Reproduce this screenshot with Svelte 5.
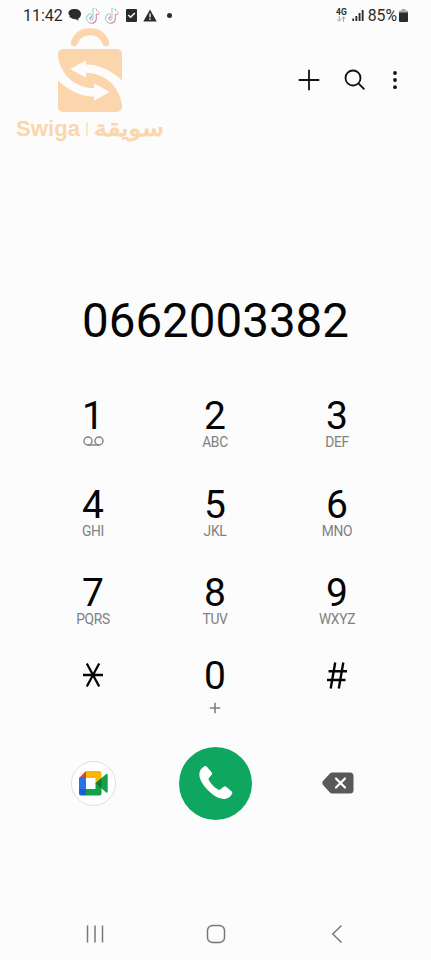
<script lang="ts">
  type Key = { digit: string; letters?: string };

  const dialed = '0662003382';

  const keys: Key[] = [
    { digit: '1' },
    { digit: '2', letters: 'ABC' },
    { digit: '3', letters: 'DEF' },
    { digit: '4', letters: 'GHI' },
    { digit: '5', letters: 'JKL' },
    { digit: '6', letters: 'MNO' },
    { digit: '7', letters: 'PQRS' },
    { digit: '8', letters: 'TUV' },
    { digit: '9', letters: 'WXYZ' },
    { digit: '*' },
    { digit: '0', letters: '+' },
    { digit: '#' }
  ];
</script>

{#snippet note()}
  <svg class="note" width="15" height="17" viewBox="0 0 15 17">
    <g fill="none" stroke-width="3.2">
      <path d="M8.600 1.500v10a3.200 3.200 0 1 1-3.200-3.200M8.600 2.500c.4 2 1.900 3.300 4 3.500" stroke="#8fdcd8" transform="translate(-.6 -.4)" />
      <path d="M8.600 1.500v10a3.200 3.200 0 1 1-3.200-3.200M8.600 2.500c.4 2 1.900 3.300 4 3.500" stroke="#c58a9f" transform="translate(.6 .5)" />
      <path d="M8.600 1.500v10a3.200 3.200 0 1 1-3.200-3.200M8.600 2.500c.4 2 1.900 3.300 4 3.500" stroke="#fff" stroke-width="2.300" />
    </g>
  </svg>
{/snippet}

<div class="phone">
  <header class="status">
    <span class="time">11:42</span>
    <div class="notifications">
      <svg width="14" height="14" viewBox="0 0 14 14" fill="#2b2b2b">
        <path d="M6.600 1C10.200 1 13 2.800 13 6c0 2.300-1.100 3.600-2.700 4.400v2.400L8 11.200C5.700 11.300 3.800 10.700 2.700 9.500L1.300 9.300l.5-1.500C.9 7 .4 6.200.4 5.300.4 2.500 3 1 6.600 1z" />
      </svg>
      {@render note()}
      {@render note()}
      <svg class="task" width="11" height="13" viewBox="0 0 11 13">
        <rect width="11" height="13" rx="1" fill="#2b2b2b" />
        <path d="M2.300 6l2.300 2.300 4.200-4.300" fill="none" stroke="#fff" stroke-width="1.500" />
      </svg>
      <svg class="warning" width="14" height="13" viewBox="0 0 14 13">
        <path d="M7 .5 13.700 12.500H.3z" fill="#2b2b2b" />
        <path d="M7 4.500v4M7 9.600v1.500" stroke="#fff" stroke-width="1.300" />
      </svg>
      <span class="more-dot"></span>
    </div>
    <div class="system">
      <div class="network">
        <span>4G</span>
        <svg width="9" height="6" viewBox="0 0 9 6" fill="none" stroke="#a3a3a3" stroke-width="1">
          <path d="M2.300 0v5M.4 3.200l1.900 2 1.900-2M6.600 6V1M4.800 2.800l1.800-2 1.900 2" />
        </svg>
      </div>
      <svg width="12" height="12" viewBox="0 0 12 12" fill="#303030">
        <path d="M.3 9.500h1.800V12H.3zM3.400 7h1.900v5H3.400zM6.600 4h1.900v8H6.600zM9.700 1h1.900v11H9.700z" />
      </svg>
      <span class="percent">85%</span>
      <svg class="battery" width="9" height="13" viewBox="0 0 9 13">
        <path d="M2.500 0h4v1.500H8a1 1 0 0 1 1 1V4H0V2.500a1 1 0 0 1 1-1h1.500z" fill="#a9a9a9" />
        <path d="M0 3.500h9V12a1 1 0 0 1-1 1H1a1 1 0 0 1-1-1z" fill="#2b2b2b" />
      </svg>
    </div>
  </header>

  <div class="watermark">
    <svg width="160" height="120" viewBox="0 0 160 120">
      <path d="M59.200 17.800C61.800 10.500 67.500 6.800 75 6.800s13.200 3.700 15.800 11" fill="none" stroke="#fbd6ac" stroke-width="7" stroke-linecap="round" />
      <rect x="43" y="24" width="64" height="63" rx="5" fill="#fbd6ac" />
      <path
        d="M55.300 44 71 35.300v4.200C84 39.500 97 45.500 107.500 56v27C105.500 62 91 48.300 71 47.700v5z
           M94.700 67 79 75.800v-4.300C66 71.500 53 65.500 42.500 55V28C44.500 49 59 62.700 79 63.300v-5z"
        fill="#fcfcfc"
      />
      <g fill="#fbd6ac">
        <text class="brand" x="1" y="111" textLength="64" lengthAdjust="spacingAndGlyphs">Swiga</text>
        <rect x="71.300" y="97" width="1.200" height="14" />
        <text class="brand-ar" x="79" y="111" textLength="70" lengthAdjust="spacingAndGlyphs">سويقة</text>
      </g>
    </svg>
  </div>

  <div class="toolbar">
    <svg width="22" height="22" viewBox="0 0 22 22" stroke="#111" stroke-width="1.800">
      <path d="M11 .7v20.600M.7 11h20.600" />
    </svg>
    <svg class="search" width="22" height="22" viewBox="0 0 22 22" fill="none" stroke="#111" stroke-width="1.800">
      <circle cx="9" cy="9" r="7.500" />
      <path d="M14.400 14.400l6 6" />
    </svg>
    <svg class="menu" width="4" height="20" viewBox="0 0 4 20" fill="#111">
      <circle cx="2" cy="3" r="1.900" />
      <circle cx="2" cy="10" r="1.900" />
      <circle cx="2" cy="17.200" r="1.900" />
    </svg>
  </div>

  <div class="dialed">{dialed}</div>

  <div class="keypad">
    {#each keys as key}
      <div class="key">
        {#if key.digit === '*'}
          <svg class="star" width="22" height="26" viewBox="0 0 22 26" stroke="#050505" stroke-width="2.300">
            <path d="M1 13h20M4.800 1.500l12.400 23M17.200 1.500l-12.400 23" />
          </svg>
        {:else if key.digit === '#'}
          <svg class="hash" width="22" height="27" viewBox="0 0 22 27" stroke="#050505" stroke-width="2.400">
            <path d="M9.200.5 4.700 26.500M17.300.5l-4.500 26M2.500 9.200h18.500M1 18h18.500" />
          </svg>
        {:else}
          <span class="digit">{key.digit}</span>
        {/if}
        {#if key.digit === '1'}
          <svg class="voicemail" width="21" height="11" viewBox="0 0 21 11" fill="none" stroke="#808080" stroke-width="1.400">
            <circle cx="5" cy="5" r="4" />
            <circle cx="16" cy="5" r="4" />
            <path d="M5 9h11" />
          </svg>
        {:else if key.letters === '+'}
          <svg class="plus" width="12" height="12" viewBox="0 0 12 12" stroke="#808080" stroke-width="1.600">
            <path d="M6 .8v10.400M.8 6h10.400" />
          </svg>
        {:else if key.letters}
          <span class="letters">{key.letters}</span>
        {/if}
      </div>
    {/each}
  </div>

  <div class="actions">
    <div class="meet">
      <svg width="29" height="25" viewBox="0 0 29 25">
        <path d="M7 0v7H0z" fill="#e33b2e" />
        <path d="M7 0h13.500a2 2 0 0 1 2 2v10H16.500V7H7z" fill="#fbb505" />
        <path d="M0 7h7v11H0z" fill="#2672ea" />
        <path d="M0 18h7v6.500H2a2 2 0 0 1-2-2z" fill="#1b5fd0" />
        <path d="M7 24.500V18h9.500v-6h6v10.500a2 2 0 0 1-2 2z" fill="#12a04a" />
        <path d="M16.500 12.300l10.700-9.200c.7-.5 1.500-.2 1.500.7v17c0 .9-.8 1.200-1.500.7z" fill="#12a04a" />
        <path d="M16.500 12.300 22.500 7v10.500z" fill="#107a35" />
      </svg>
    </div>
    <div class="call">
      <svg width="36" height="36" viewBox="0 0 36 36" fill="#fff">
        <path d="M1.400 8.500C1.700 5.200 4 2.400 6.500 1.300c1-.4 1.900-.2 2.600.7l4.500 5.200c.8.900.8 1.800.1 2.600l-2.600 3c-.7.800-.7 1.600-.2 2.500 2.200 3.900 5.300 7 9.200 9.200.9.500 1.700.5 2.500-.2l3-2.600c.8-.7 1.700-.7 2.600 0l5.200 4.500c.9.700 1.100 1.600.7 2.600-1.100 2.500-3.900 4.800-7.200 5.100-4.900.5-11.100-2.800-16.700-8.400S.9 13.400 1.400 8.500z" />
      </svg>
    </div>
    <svg width="32" height="22" viewBox="0 0 32 22">
      <path d="M10.500.5H28a3.500 3.500 0 0 1 3.500 3.500v14a3.500 3.500 0 0 1-3.500 3.500H10.500c-1.200 0-2-.4-2.800-1.200L1 12.900c-1-1.200-1-2.600 0-3.800l6.700-7.400C8.500.9 9.300.5 10.500.5z" fill="#595959" />
      <path d="M14 6.500l9 9M23 6.500l-9 9" stroke="#fff" stroke-width="2.200" stroke-linecap="round" />
    </svg>
  </div>

  <nav class="navbar">
    <svg width="18" height="18" viewBox="0 0 18 18" stroke="#777" stroke-width="1.500">
      <path d="M1.500.5v17M9 .5v17M16.500 .5v17" />
    </svg>
    <svg width="20" height="20" viewBox="0 0 20 20" fill="none" stroke="#777" stroke-width="1.500">
      <rect x="1.500" y="1.500" width="17" height="17" rx="5" />
    </svg>
    <svg width="12" height="20" viewBox="0 0 12 20" fill="none" stroke="#777" stroke-width="1.500">
      <path d="M10.500 1.500 1.800 10l8.700 8.500" />
    </svg>
  </nav>
</div>

<style>
  :global(body) {
    background: #fcfcfc;
  }

  svg {
    display: block;
    flex: none;
  }

  .phone {
    position: relative;
    display: flex;
    flex-direction: column;
    box-sizing: border-box;
    width: 431px;
    height: 960px;
    overflow: hidden;
    background: #fcfcfc;
    color: #050505;
    font-family: Roboto, sans-serif;
  }

  .status {
    display: flex;
    align-items: center;
    height: 30px;
    padding: 0 23px;
    color: #2b2b2b;
    font-size: 16px;
  }

  .time {
    width: 45px;
  }

  .notifications {
    display: flex;
    align-items: center;
  }

  .note {
    margin-left: 4px;
  }

  .task {
    margin-left: 6px;
  }

  .warning {
    margin-left: 6px;
  }

  .more-dot {
    width: 5px;
    height: 5px;
    margin-left: 10px;
    border-radius: 50%;
    background: #2b2b2b;
  }

  .system {
    display: flex;
    align-items: center;
    margin-left: auto;
  }

  .network {
    display: flex;
    flex-direction: column;
    align-items: center;
    margin-right: 5px;
    font-size: 8.5px;
    font-weight: 700;
    line-height: 8px;
  }

  .percent {
    margin-left: 4px;
    font-size: 15.8px;
  }

  .battery {
    margin-left: 2px;
  }

  /* brand mark floats over the screen */
  .watermark {
    position: absolute;
    top: 25px;
    left: 15px;
  }

  .brand {
    font: 700 22px 'Liberation Sans', sans-serif;
  }

  .brand-ar {
    font: 400 22px 'DejaVu Sans', sans-serif;
    stroke: #fbd6ac;
    stroke-width: 1px;
  }

  .toolbar {
    display: flex;
    align-items: center;
    justify-content: flex-end;
    height: 100px;
    padding-right: 34px;
  }

  .search {
    margin-left: 24px;
  }

  .menu {
    margin-left: 27px;
  }

  .dialed {
    margin-top: 161px;
    font-size: 47.5px;
    line-height: 60px;
    text-align: center;
  }

  .keypad {
    display: grid;
    grid-template-columns: repeat(3, 122px);
    grid-template-rows: 88.5px 88.5px 83px 84px;
    margin: 47px 0 0 32px;
  }

  .key {
    display: flex;
    flex-direction: column;
    align-items: center;
  }

  .digit {
    font-size: 39px;
    line-height: 37px;
  }

  .letters {
    color: #808080;
    font-size: 13.8px;
    letter-spacing: -0.3px;
    line-height: 14px;
  }

  .voicemail {
    margin-top: 1px;
  }

  .star {
    margin-top: 4px;
  }

  .hash {
    margin-top: 4px;
  }

  .plus {
    margin-top: 7px;
  }

  .actions {
    display: grid;
    grid-template-columns: repeat(3, 122px);
    align-items: center;
    justify-items: center;
    height: 74px;
    margin: 4px 0 0 32.5px;
  }

  .meet {
    display: flex;
    align-items: center;
    justify-content: center;
    box-sizing: border-box;
    width: 45px;
    height: 45px;
    border: 1px solid #dedede;
    border-radius: 50%;
    background: #fff;
  }

  .call {
    display: flex;
    align-items: center;
    justify-content: center;
    width: 73px;
    height: 73px;
    border-radius: 50%;
    background: #0fa75f;
  }

  .navbar {
    display: grid;
    grid-template-columns: repeat(3, 121px);
    align-items: center;
    justify-items: center;
    height: 52px;
    margin: auto 0 0 34.5px;
  }
</style>
